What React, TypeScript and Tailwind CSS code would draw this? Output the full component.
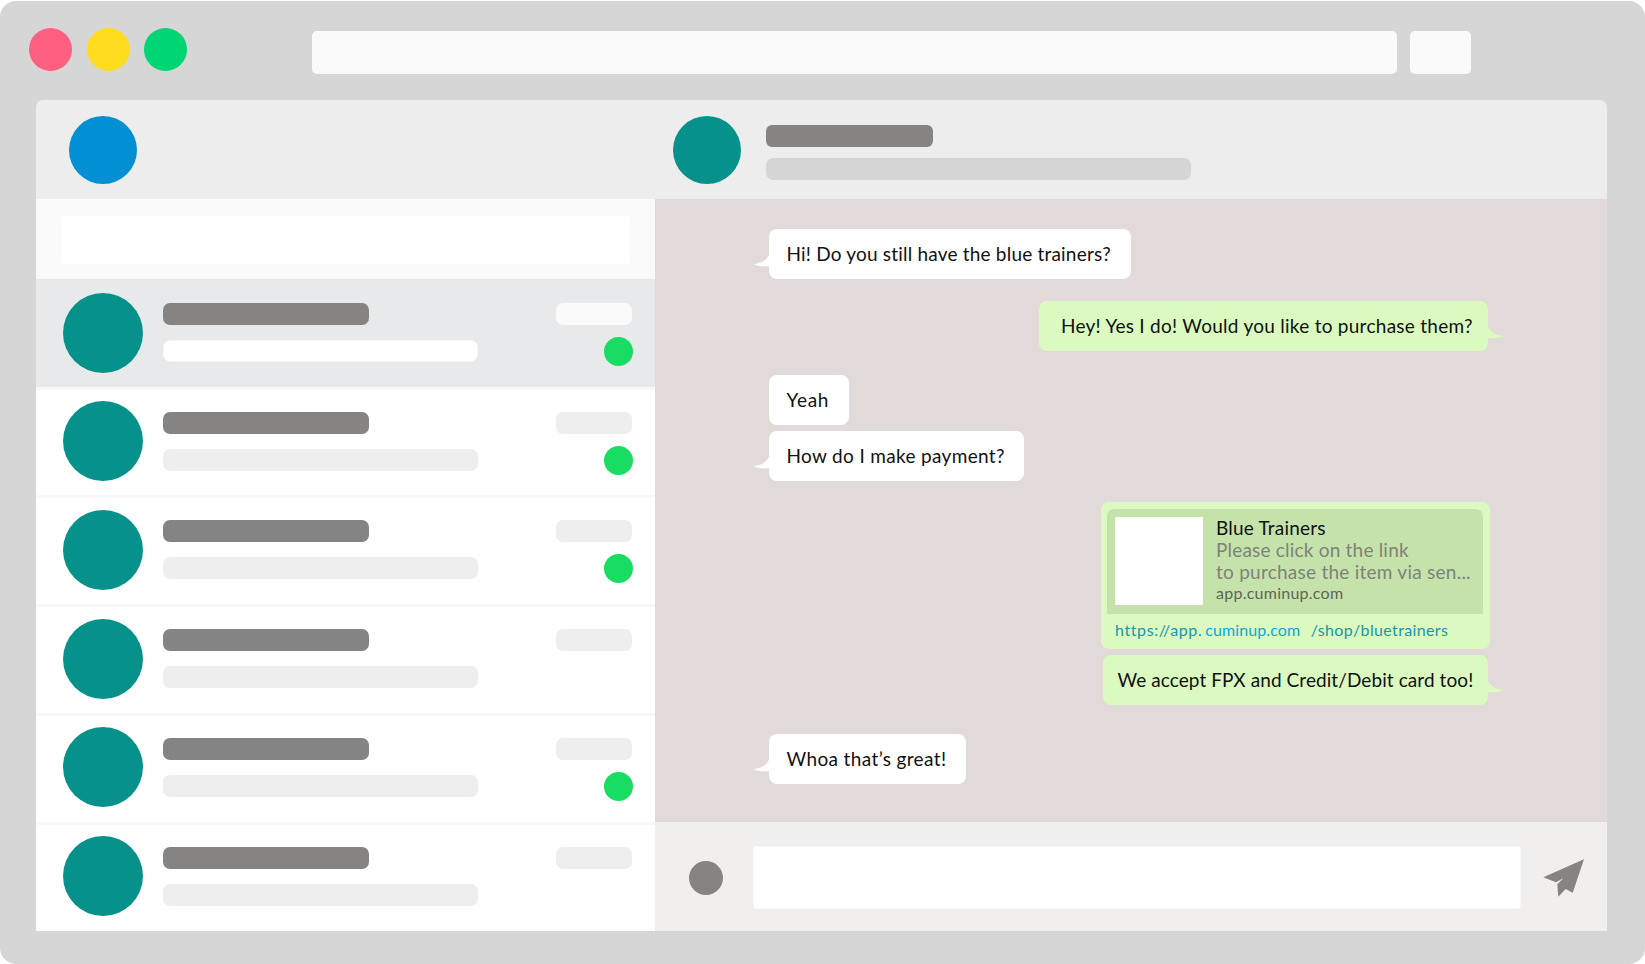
// App.tsx - chat window mockup
const FONT = "font-['Lato','Liberation_Sans',sans-serif]";

const rows = [
  { active: true, dot: true },
  { active: false, dot: true },
  { active: false, dot: true },
  { active: false, dot: false },
  { active: false, dot: true },
  { active: false, dot: false },
];

function Tail({ side, color }: { side: "left" | "right"; color: string }) {
  if (side === "left") {
    return (
      <svg className="absolute left-[-16px] bottom-[12px]" width="17" height="16" viewBox="0 0 17 16">
        <path d="M17 0 C16 7 11 12 0 13 C4 15 10 16 17 15 Z" fill={color} />
      </svg>
    );
  }
  return (
    <svg className="absolute right-[-16px] bottom-[12px]" width="17" height="16" viewBox="0 0 17 16">
      <path d="M0 0 C1 7 6 12 17 13 C13 15 7 16 0 15 Z" fill={color} />
    </svg>
  );
}

function Bubble({ text, mine, tail, className }: { text: string; mine?: boolean; tail?: boolean; className: string }) {
  return (
    <div
      className={`relative h-[50px] rounded-[8px] flex items-center text-[19px] text-[#111111] ${
        mine ? "self-end bg-[#dafac0]" : "self-start bg-white"
      } ${className}`}
    >
      <span className="whitespace-nowrap pt-[1px]">{text}</span>
      {tail && <Tail side={mine ? "right" : "left"} color={mine ? "#dafac0" : "#ffffff"} />}
    </div>
  );
}

function ChatRow({ active, dot, first, last }: { active: boolean; dot: boolean; first: boolean; last: boolean }) {
  return (
    <div
      className={`flex pl-[27px] pr-[23.5px] ${active ? "bg-[#e8e9eb]" : "bg-white"} ${
        first ? "h-[108px] pt-[14px]" : "border-t-[3.5px] border-[#f8f8f8] pt-[11.5px]"
      } ${last ? "flex-1" : first ? "" : "h-[108.75px]"}`}
    >
      <div className="w-[80px] h-[80px] rounded-full bg-[#06928a] shrink-0" />
      <div className="ml-[20px] pt-[10.5px]">
        <div className="w-[206px] h-[22px] rounded-[7px] bg-[#858482]" />
        <div
          className={`w-[315px] h-[22px] mt-[15px] rounded-[7px] ${
            active ? "bg-white border border-[#f6f6f6]" : "bg-[#eeeeee]"
          }`}
        />
      </div>
      <div className="ml-auto pt-[10.5px] flex flex-col items-end">
        <div className={`w-[76px] h-[22px] rounded-[7px] ${active ? "bg-[#fafafa]" : "bg-[#eeeeee]"}`} />
        {dot && <div className="w-[29px] h-[29px] mt-[12px] mr-[-1.5px] rounded-full bg-[#19dd62]" />}
      </div>
    </div>
  );
}

export default function App() {
  return (
    <div className={`w-[1645px] h-[964px] bg-white overflow-hidden ${FONT}`}>
      <div className="w-[1645px] h-[963px] mt-[1px] bg-[#d6d6d6] rounded-[16px] flex flex-col">
        {/* title bar */}
        <div className="flex items-start h-[99px] pl-[29px] pt-[27px]">
          <div className="w-[43px] h-[43px] rounded-full bg-[#ff5f80]" />
          <div className="w-[43px] h-[43px] ml-[15px] rounded-full bg-[#ffdc1e]" />
          <div className="w-[43px] h-[43px] ml-[14px] rounded-full bg-[#00d574]" />
          <div className="w-[1085px] h-[43px] ml-[125px] mt-[3px] rounded-[5px] bg-[#fafafa]" />
          <div className="w-[61px] h-[43px] ml-[13px] mt-[3px] rounded-[5px] bg-[#fafafa]" />
        </div>

        {/* window */}
        <div className="mx-[36px] w-[1571px] h-[831px] rounded-t-[7px] overflow-hidden flex flex-col">
          <div className="flex h-[98.5px] bg-[#ededed] shrink-0">
            <div className="w-[619px] pl-[32.5px] pt-[16px]">
              <div className="w-[68px] h-[68px] rounded-full bg-[#028fd4]" />
            </div>
            <div className="flex pl-[18px] pt-[16px]">
              <div className="w-[68px] h-[68px] rounded-full bg-[#06928a]" />
              <div className="ml-[24.5px] pt-[9px]">
                <div className="w-[167px] h-[21.5px] rounded-[6px] bg-[#858482]" />
                <div className="w-[425.5px] h-[21.5px] mt-[11.5px] rounded-[7px] bg-[#d6d6d6]" />
              </div>
            </div>
          </div>

          <div className="flex flex-1 min-h-0">
            {/* sidebar */}
            <div className="w-[619px] shrink-0 flex flex-col">
              <div className="h-[80px] bg-[#fafafa] pl-[26px] pr-[25px] pt-[17.5px]">
                <div className="h-[47.5px] bg-white rounded-[2px]" />
              </div>
              {rows.map((r, i) => (
                <ChatRow key={i} active={r.active} dot={r.dot} first={i === 0} last={i === rows.length - 1} />
              ))}
            </div>

            {/* conversation */}
            <div className="flex-1 flex flex-col">
              <div className="h-[623.5px] bg-[#e2dad8] pl-[113.5px] pr-[119px] pt-[30.5px] flex flex-col">
                <Bubble text="Hi! Do you still have the blue trainers?" tail className="w-[362.5px] pl-[18px] tracking-[0.2px]" />
                <Bubble text="Hey! Yes I do! Would you like to purchase them?" mine tail className="w-[449px] pl-[22px] mt-[22px] tracking-[0.27px]" />
                <Bubble text="Yeah" className="w-[80px] pl-[18px] mt-[23.5px] tracking-[0.7px]" />
                <Bubble text="How do I make payment?" tail className="w-[255px] pl-[18px] mt-[6px] tracking-[0.34px]" />

                <div className="self-end w-[389px] h-[147px] mt-[21px] mr-[-2px] rounded-[8px] bg-[#dafac0] pl-[6px] pr-[7px] pt-[7px]">
                  <div className="h-[105px] rounded-t-[7px] bg-[#c6e2ab] flex pl-[8px] pt-[8px]">
                    <div className="w-[88px] h-[88px] bg-white shrink-0" />
                    <div className="ml-[13px] text-[19px] leading-[22px] tracking-[0.2px] text-[#7c8479]">
                      <div className="text-[#111111]">Blue Trainers</div>
                      <div>Please click on the link</div>
                      <div className="whitespace-nowrap tracking-[0.25px]">to purchase the item via sen...</div>
                      <div className="text-[16px] leading-[20px] tracking-[0.25px] text-[#5d6558]">app.cuminup.com</div>
                    </div>
                  </div>
                  <div className="pl-[8px] pt-[6px] text-[16px] leading-[20px] tracking-[0.36px] whitespace-nowrap text-[#1a94ab]">
                    <span className="tracking-[0.6px]">https://app.</span>
                    <span className="ml-[3px] tracking-[0.1px] text-[#0ea6da]">cuminup.com</span>
                    <span className="ml-[10.5px]">/shop/bluetrainers</span>
                  </div>
                </div>

                <Bubble text="We accept FPX and Credit/Debit card too!" mine tail className="w-[385px] pl-[14.5px] mt-[6px] tracking-[0.08px]" />
                <Bubble text="Whoa that’s great!" className="w-[197px] pl-[18px] mt-[29.5px] tracking-[0.37px]" tail />
              </div>

              <div className="flex-1 bg-[#f0efee] flex items-start pl-[34px]">
                <div className="w-[34px] h-[34px] mt-[39px] rounded-full bg-[#858482]" />
                <div className="w-[768px] h-[63px] ml-[30px] mt-[24px] bg-white rounded-[2px] border border-[#f6f6f6]" />
                <svg className="ml-[21px] mt-[37px]" width="42" height="38" viewBox="0 0 42 38">
                  <path d="M42 0.3 L1.3 18.3 L14 23.3 L21.3 19.3 L15.3 25.3 L16.3 37.7 L23.7 30 L30.7 33.7 Z" fill="#858482" />
                </svg>
              </div>
            </div>
          </div>
        </div>
      </div>
    </div>
  );
}
